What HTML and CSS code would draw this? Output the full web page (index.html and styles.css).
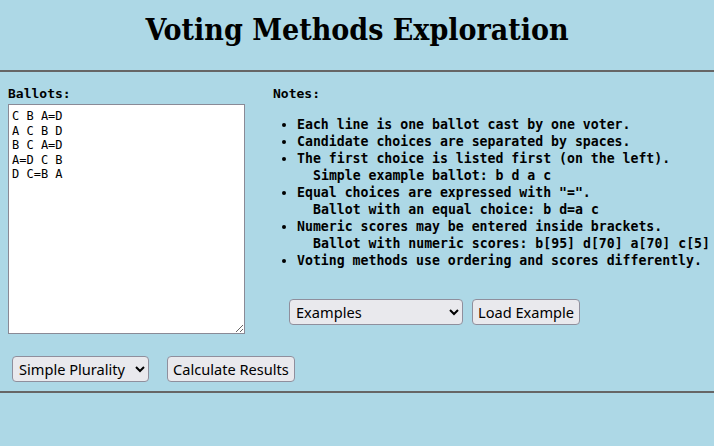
FILE: index.html
```html
<!DOCTYPE html>
<html>
<head>
<meta charset="utf-8">
<link rel="stylesheet" href="styles.css">
</head>
<body>
<h1 class="title">Voting Methods Exploration</h1>
<hr class="rule">
<div class="page">
  <div class="main">
    <div class="ballots">
      <div class="label">Ballots:</div>
      <textarea class="ballot-box">C B A=D
A C B D
B C A=D
A=D C B
D C=B A</textarea>
    </div>
    <div class="notes">
      <div class="label">Notes:</div>
      <ul class="note-list">
        <li>Each line is one ballot cast by one voter.</li>
        <li>Candidate choices are separated by spaces.</li>
        <li>The first choice is listed first (on the left).<div class="sub">Simple example ballot: b d a c</div></li>
        <li>Equal choices are expressed with "=".<div class="sub">Ballot with an equal choice: b d=a c</div></li>
        <li>Numeric scores may be entered inside brackets.<div class="sub">Ballot with numeric scores: b[95] d[70] a[70] c[5]</div></li>
        <li>Voting methods use ordering and scores differently.</li>
      </ul>
      <div class="example-row">
        <select class="ctl sel examples"><option>Examples</option></select>
        <button class="ctl btn">Load Example</button>
      </div>
    </div>
  </div>
  <div class="calc-row">
    <select class="ctl sel method"><option>Simple Plurality</option></select>
    <button class="ctl btn">Calculate Results</button>
  </div>
</div>
<hr class="rule">
</body>
</html>
```
FILE: styles.css
```css
html, body {
  background: #add8e6;
}
html {
  overflow: hidden;
}
body {
  margin: 0;
  padding-top: 8px;
  font-family: "DejaVu Serif", serif;
}
.title {
  font-family: "DejaVu Serif", serif;
  font-stretch: condensed;
  font-weight: bold;
  font-size: 30px;
  text-align: center;
  margin: 4px 8px 22px;
  line-height: 36px;
}
.rule {
  display: block;
  border: none;
  border-top: 2px solid #666;
  margin: 0;
  width: 100%;
}
.page {
  padding: 0 8px;
}
.main {
  display: flex;
  margin-top: 14px;
}
.label {
  font-family: "DejaVu Sans Mono", monospace;
  font-weight: bold;
  font-size: 13px;
  line-height: 16px;
}
.ballots {
  width: 237px;
  flex: none;
}
.ballot-box {
  display: block;
  box-sizing: border-box;
  width: 237px;
  height: 230px;
  margin-top: 2px;
  font-family: "DejaVu Sans Mono", monospace;
  font-size: 12px;
  line-height: 14.5px;
  padding: 4px 3px;
  border: 1px solid #8a8a96;
  background: #fff;
  resize: both;
}
.notes {
  margin-left: 28px;
  flex: none;
}
.note-list {
  font-family: "DejaVu Sans Mono", monospace;
  font-weight: bold;
  font-size: 13.2px;
  line-height: 17px;
  margin: 14px 0 0;
  padding-left: 24px;
  white-space: nowrap;
}
.sub {
  padding-left: 16px;
}
.example-row {
  display: flex;
  gap: 9px;
  margin-top: 30px;
  margin-left: 16px;
}
.ctl {
  font-family: "Noto Sans", sans-serif;
  font-size: 14.6px;
  height: 26px;
  box-sizing: border-box;
  background: #e9e9ed;
  border: 1px solid #8f8f9d;
  border-radius: 4px;
  color: #000;
  padding: 0 5px;
}
.sel {
  padding: 0 2px;
}
.examples {
  width: 174px;
}
.calc-row {
  display: flex;
  gap: 18px;
  margin: 22px 0 9px 4px;
}
.method {
  width: 137px;
}
```
